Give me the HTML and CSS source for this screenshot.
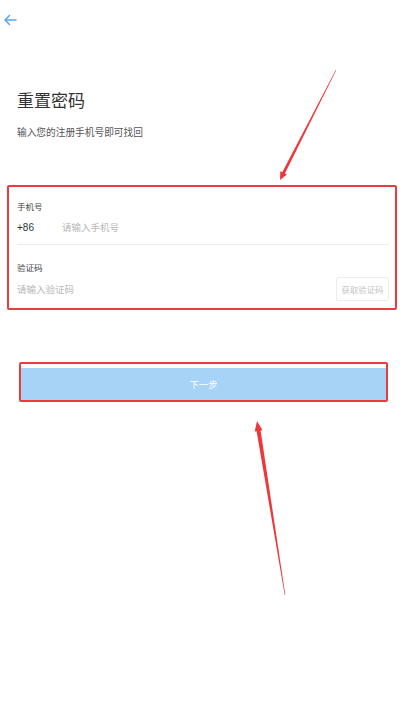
FILE: index.html
```html
<!DOCTYPE html>
<html lang="zh-CN">
<head>
<meta charset="utf-8">
<title>重置密码</title>
<link rel="stylesheet" href="styles.css">
</head>
<body>
<div class="page">
  <header class="topbar">
    <svg class="back" width="14" height="12" viewBox="0 0 14 12"><path d="M13 6H2M6.5 1.5L2 6l4.5 4.5" fill="none" stroke="#5aa5f0" stroke-width="1.5" stroke-linecap="round" stroke-linejoin="round"/></svg>
  </header>
  <section class="intro">
    <h1 class="title">重置密码</h1>
    <p class="subtitle">输入您的注册手机号即可找回</p>
  </section>
  <div class="form-box">
    <div class="field field-phone">
      <div class="label">手机号</div>
      <div class="input-row">
        <span class="prefix">+86</span>
        <span class="placeholder">请输入手机号</span>
      </div>
    </div>
    <div class="field field-code">
      <div class="label">验证码</div>
      <div class="input-row">
        <span class="placeholder">请输入验证码</span>
        <span class="code-btn">获取验证码</span>
      </div>
    </div>
  </div>
  <div class="next-box">
    <div class="next-btn">下一步</div>
  </div>
  <svg class="annot" width="407" height="720" viewBox="0 0 407 720">
    <polygon fill="#f0363a" points="336.3,70.1 284.9,173.5 286.9,174.6 280,180 280.3,171.2 282.3,172.3 335.7,69.9"/>
    <polygon fill="#f0363a" points="285.3,595 260.6,430.6 262.5,430.3 257,421 254.7,431.5 256.6,431.2 284.7,595.1"/>
  </svg>
</div>
</body>
</html>
```
FILE: styles.css
```css
* { box-sizing: border-box; }
html, body { margin: 0; padding: 0; background: #fff; }
body { font-family: "Noto Sans CJK SC", "Noto Sans", sans-serif; }
.page { position: relative; width: 407px; height: 720px; overflow: hidden; }
.topbar { height: 40px; display: flex; align-items: center; padding-left: 3px; }
.back { display: block; }
.intro { padding: 0 17px; }
.title { margin: 50px 0 0; font-size: 17px; line-height: 20px; font-weight: 400; color: #333; }
.subtitle { margin: 16px 0 0; font-size: 9.7px; line-height: 12px; color: #555; }
.form-box { margin: 47px 10px 0 7px; border: 2px solid #ec3b3e; border-radius: 2px; padding: 0 6px 0 8px; height: 125px; }
.field-phone { padding-top: 13px; border-bottom: 1px solid #ececec; padding-bottom: 9px; }
.field-code { padding-top: 16px; }
.label { font-size: 8.5px; line-height: 12px; color: #444; }
.input-row { display: flex; align-items: center; }
.field-phone .input-row { margin-top: 7px; height: 16px; }
.field-code .input-row { margin-top: 4px; height: 24px; justify-content: space-between; }
.prefix { font-family: "Liberation Sans", sans-serif; font-size: 10px; color: #333; width: 45px; }
.placeholder { font-size: 9.5px; color: #b8b8b8; }
.code-btn { border: 1px solid #ececec; border-radius: 2px; width: 53px; height: 24px; display: flex; align-items: center; justify-content: center; font-size: 8.4px; color: #c4c4c4; }
.next-box { margin: 52px 19px 0 19px; border: 2px solid #ec3b3e; border-radius: 2px; height: 40px; padding-top: 4px; }
.next-btn { height: 32px; background: #a7d3f7; display: flex; align-items: center; justify-content: center; font-size: 9.3px; color: #fff; }
.annot { position: absolute; left: 0; top: 0; pointer-events: none; }
```
